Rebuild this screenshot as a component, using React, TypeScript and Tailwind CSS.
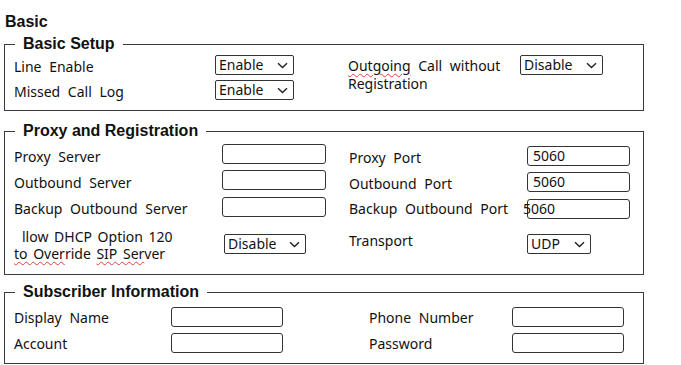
import React from "react";

const baseFont = "font-['Noto_Sans',sans-serif] text-[14px] text-[#111]";
const labelFont = `${baseFont} [word-spacing:4px]`;

function Chevron() {
  return (
    <svg width="11" height="7" viewBox="0 0 11 7" className="shrink-0">
      <path d="M1 1.2 L5.5 5.6 L10 1.2" fill="none" stroke="#222" strokeWidth="1.4" />
    </svg>
  );
}

function Select({ value, w }: { value: string; w: string }) {
  return (
    <div
      className={`${w} h-[20px] border-[1.5px] border-[#333] rounded-[2px] flex items-center justify-between pl-[3px] pr-[5px] font-['Noto_Sans',sans-serif] text-[14px] leading-none text-[#111] bg-white`}
    >
      <span>{value}</span>
      <Chevron />
    </div>
  );
}

function Input({ w, value, shift }: { w: string; value?: string; shift?: boolean }) {
  return (
    <div
      className={`${w} h-[20px] border-[1.5px] border-[#333] rounded-[3px] flex items-center font-['Noto_Sans',sans-serif] text-[14px] leading-none text-[#111] bg-white ${shift ? "pl-0" : "pl-[5px]"}`}
    >
      {value && <span className={shift ? "-ml-[5px]" : ""}>{value}</span>}
    </div>
  );
}

function Legend({ children }: { children: React.ReactNode }) {
  return (
    <legend className="ml-[1px] px-[8px] font-['Liberation_Sans',sans-serif] font-bold text-[16px] leading-[20px] text-[#111]">
      {children}
    </legend>
  );
}

const Wavy = ({ children }: { children: React.ReactNode }) => (
  <span className="inline-block leading-[16px] underline decoration-wavy decoration-[#e04040] decoration-[1px] underline-offset-[2px]">
    {children}
  </span>
);

export default function App() {
  return (
    <div className="w-[681px] h-[365px] bg-white pl-[4px] pt-[12px] overflow-hidden">
      <div className="font-['Liberation_Sans',sans-serif] font-bold text-[16px] leading-[20px] text-[#111] pl-[1px]">
        Basic
      </div>

      {/* Basic Setup */}
      <fieldset className="mt-[2px] w-[640px] border-[1.5px] border-[#3a3a3a] pl-[9px] pt-[1px] pb-[10px]">
        <Legend>Basic Setup</Legend>
        <div className="flex">
          <div className="flex flex-col gap-[5px]">
            <div className="flex items-center h-[20px]">
              <div className={`w-[201px] ${labelFont} pt-[3px]`}>Line Enable</div>
              <Select value="Enable" w="w-[79px]" />
            </div>
            <div className="flex items-center h-[20px]">
              <div className={`w-[201px] ${labelFont} pt-[3px]`}>Missed Call Log</div>
              <Select value="Enable" w="w-[79px]" />
            </div>
          </div>
          <div className="ml-[54px] flex items-start">
            <div className={`w-[172px] ${labelFont} leading-[18px] pt-[2px]`}>
              <Wavy>Outgoing</Wavy> Call without
              <br />
              Registration
            </div>
            <Select value="Disable" w="w-[83px]" />
          </div>
        </div>
      </fieldset>

      {/* Proxy and Registration */}
      <fieldset className="mt-[10px] w-[640px] border-[1.5px] border-[#3a3a3a] pl-[9px] pt-[3px] pb-[12px]">
        <Legend>Proxy and Registration</Legend>
        <div className="flex">
          <div className="flex flex-col">
            <div className="flex items-center h-[20px]">
              <div className={`w-[208px] ${labelFont} pt-[5px]`}>Proxy Server</div>
              <Input w="w-[104px]" />
            </div>
            <div className="flex items-center h-[20px] mt-[6px]">
              <div className={`w-[208px] ${labelFont} pt-[5px]`}>Outbound Server</div>
              <Input w="w-[104px]" />
            </div>
            <div className="flex items-center h-[21px] mt-[6px]">
              <div className={`w-[208px] ${labelFont} pt-[4px]`}>Backup Outbound Server</div>
              <Input w="w-[104px]" />
            </div>
            <div className="flex items-center h-[36px] mt-[9px]">
              <div className={`w-[210px] ${baseFont} [word-spacing:2px] leading-[17px] pt-[1px]`}>
                <span className="pl-[8px]">llow DHCP Option 120</span>
                <br />
                <Wavy>to Over</Wavy>ride <Wavy>SIP Ser</Wavy>ver
              </div>
              <Select value="Disable" w="w-[82px]" />
            </div>
          </div>
          <div className="ml-[23px] flex flex-col pt-[2px]">
            <div className="flex items-center h-[20px]">
              <div className={`w-[178px] ${labelFont} pt-[2px]`}>Proxy Port</div>
              <Input w="w-[103px]" value="5060" />
            </div>
            <div className="flex items-center h-[20px] mt-[6px]">
              <div className={`w-[178px] ${labelFont} pt-[2px]`}>Outbound Port</div>
              <Input w="w-[103px]" value="5060" />
            </div>
            <div className="flex items-center h-[21px] mt-[6px]">
              <div className={`w-[178px] ${labelFont}`}>Backup Outbound Port</div>
              <Input w="w-[103px]" value="5060" shift />
            </div>
            <div className="flex items-start h-[21px] mt-[15px]">
              <div className={`w-[178px] ${labelFont} leading-[14px]`}>Transport</div>
              <Select value="UDP" w="w-[64px]" />
            </div>
          </div>
        </div>
      </fieldset>

      {/* Subscriber Information */}
      <fieldset className="mt-[7px] w-[640px] border-[1.5px] border-[#3a3a3a] pl-[9px] pt-[5px] pb-[10px]">
        <Legend>Subscriber Information</Legend>
        <div className="flex">
          <div className="flex flex-col gap-[6px]">
            <div className="flex items-center h-[20px]">
              <div className={`w-[157px] ${labelFont} pt-[1px]`}>Display Name</div>
              <Input w="w-[112px]" />
            </div>
            <div className="flex items-center h-[20px]">
              <div className={`w-[157px] ${labelFont} pt-[1px]`}>Account</div>
              <Input w="w-[112px]" />
            </div>
          </div>
          <div className="ml-[86px] flex flex-col gap-[6px]">
            <div className="flex items-center h-[20px]">
              <div className={`w-[143px] ${labelFont} pt-[1px]`}>Phone Number</div>
              <Input w="w-[112px]" />
            </div>
            <div className="flex items-center h-[20px]">
              <div className={`w-[143px] ${labelFont} pt-[1px]`}>Password</div>
              <Input w="w-[112px]" />
            </div>
          </div>
        </div>
      </fieldset>
    </div>
  );
}
